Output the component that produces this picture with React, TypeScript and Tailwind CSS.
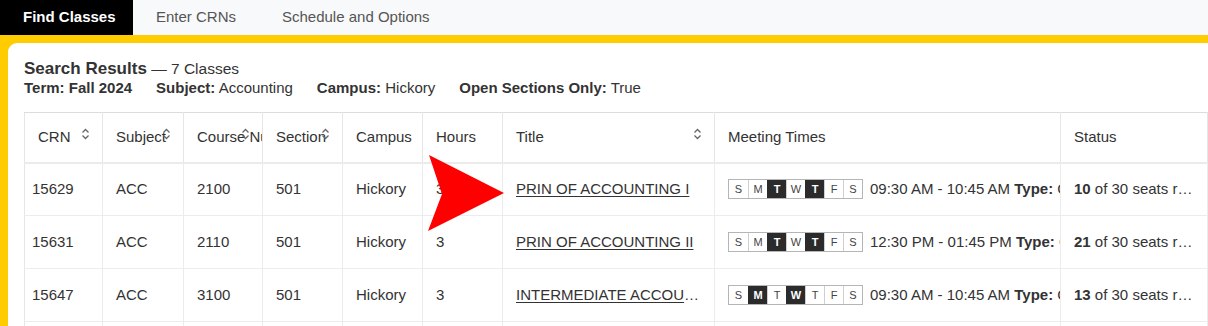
const font = { fontFamily: '"Liberation Sans", Arial, sans-serif' }

interface Row {
    crn: string
    course: string
    title: string
    days: boolean[]
    time: string
    seats: string
}

const rows: Row[] = [
    { crn: "15629", course: "2100", title: "PRIN OF ACCOUNTING I", days: [false, false, true, false, true, false, false], time: "09:30 AM - 10:45 AM", seats: "10" },
    { crn: "15631", course: "2110", title: "PRIN OF ACCOUNTING II", days: [false, false, true, false, true, false, false], time: "12:30 PM - 01:45 PM", seats: "21" },
    { crn: "15647", course: "3100", title: "INTERMEDIATE ACCOUNTING I", days: [false, true, false, true, false, false, false], time: "09:30 AM - 10:45 AM", seats: "13" },
]

const dayLetters = ["S", "M", "T", "W", "T", "F", "S"]

function SortIcon() {
    return (
        <svg width="9" height="12" viewBox="0 0 9 12" className="absolute right-[12px] top-[15px]" fill="none" stroke="#666" strokeWidth="1.3">
            <path d="M1.5 4.5 L4.5 1.5 L7.5 4.5" />
            <path d="M1.5 7.5 L4.5 10.5 L7.5 7.5" />
        </svg>
    )
}

function Days({ on }: { on: boolean[] }) {
    return (
        <span className="inline-flex border border-[#b5b5b5] shrink-0">
            {dayLetters.map((d, i) => (
                <span
                    key={i}
                    className={
                        on[i]
                            ? "w-[19px] h-[18px] flex items-center justify-center text-[11px] font-bold bg-[#2b2b2b] text-white border-l border-[#2b2b2b] first:border-l-0"
                            : "w-[19px] h-[18px] flex items-center justify-center text-[11px] bg-white text-[#444] border-l border-[#cfcfcf] first:border-l-0"
                    }
                >
                    {d}
                </span>
            ))}
        </span>
    )
}

export default function App() {
    const th = "relative h-[50px] px-[13px] text-left font-normal text-[15px] text-[#333] border-r border-[#e6e6e6] whitespace-nowrap overflow-hidden align-middle"
    const td = "h-[53px] px-[13px] text-[15px] text-[#333] border-r border-b border-[#ececec] whitespace-nowrap overflow-hidden align-middle"

    return (
        <div className="relative w-[1208px] h-[326px] overflow-hidden bg-[#f8f9fa]" style={font}>
            {/* Tabs */}
            <div className="flex h-[35px] items-stretch text-[15px]">
                <div className="flex items-center w-[133px] pl-[23px] bg-black text-white font-bold">Find Classes</div>
                <div className="flex items-center w-[126px] pl-[23px] text-[#555]">Enter CRNs</div>
                <div className="flex items-center pl-[23px] text-[#555]">Schedule and Options</div>
            </div>

            {/* Yellow frame */}
            <div className="bg-[#ffcc00] pt-[8px] pl-[8px] h-[291px]">
                <div className="bg-white rounded-tl-[9px] h-full pl-[16px] pt-[16px]">
                    <div className="text-[#333]">
                        <div className="leading-[20px]">
                            <span className="text-[17px] font-bold">Search Results</span>
                            <span className="text-[15.5px]"> — 7 Classes</span>
                        </div>
                        <div className="flex gap-[24px] text-[15px] leading-[18px]">
                            <span className="font-bold">Term: Fall 2024</span>
                            <span><b>Subject:</b> Accounting</span>
                            <span><b>Campus:</b> Hickory</span>
                            <span><b>Open Sections Only:</b> True</span>
                        </div>
                    </div>

                    <table className="mt-[15px] table-fixed border-collapse w-[1183px] border-l border-[#e6e6e6]">
                        <colgroup>
                            <col className="w-[78px]" />
                            <col className="w-[81px]" />
                            <col className="w-[79px]" />
                            <col className="w-[80px]" />
                            <col className="w-[80px]" />
                            <col className="w-[80px]" />
                            <col className="w-[212px]" />
                            <col className="w-[346px]" />
                            <col className="w-[147px]" />
                        </colgroup>
                        <thead>
                            <tr className="border-t border-[#dcdcdc] border-b-2 border-b-[#ebebeb]">
                                <th className={th}>CRN<SortIcon /></th>
                                <th className={th}>Subject<SortIcon /></th>
                                <th className={th}>Course Number<SortIcon /></th>
                                <th className={th}>Section<SortIcon /></th>
                                <th className={th}>Campus</th>
                                <th className={th}>Hours</th>
                                <th className={th}>Title<SortIcon /></th>
                                <th className={th}>Meeting Times</th>
                                <th className={th}>Status</th>
                            </tr>
                        </thead>
                        <tbody>
                            {rows.map((r) => (
                                <tr key={r.crn}>
                                    <td className={td + " pl-[7px]"}>{r.crn}</td>
                                    <td className={td}>ACC</td>
                                    <td className={td}>{r.course}</td>
                                    <td className={td}>501</td>
                                    <td className={td}>Hickory</td>
                                    <td className={td}>3</td>
                                    <td className={td + " text-ellipsis"}>
                                        <a href="#" className="underline underline-offset-2 text-[#333] block overflow-hidden text-ellipsis">{r.title}</a>
                                    </td>
                                    <td className={td + " pr-0"}>
                                        <div className="flex items-center gap-[7px] w-max">
                                            <Days on={r.days} />
                                            <span className="whitespace-nowrap">
                                                {r.time} <b>Type:</b> Class
                                            </span>
                                        </div>
                                    </td>
                                    <td className={td + " text-ellipsis"}>
                                        <b>{r.seats}</b> of 30 seats remain
                                    </td>
                                </tr>
                            ))}
                            <tr>
                                {Array.from({ length: 9 }).map((_, i) => (
                                    <td key={i} className={td}>&nbsp;</td>
                                ))}
                            </tr>
                        </tbody>
                    </table>
                </div>
            </div>

            {/* Red arrow annotation */}
            <svg className="absolute left-0 top-0 pointer-events-none" width="1208" height="326">
                <polygon points="429,155 504,193 428,231 442,194" fill="#ff0000" />
            </svg>
        </div>
    )
}
